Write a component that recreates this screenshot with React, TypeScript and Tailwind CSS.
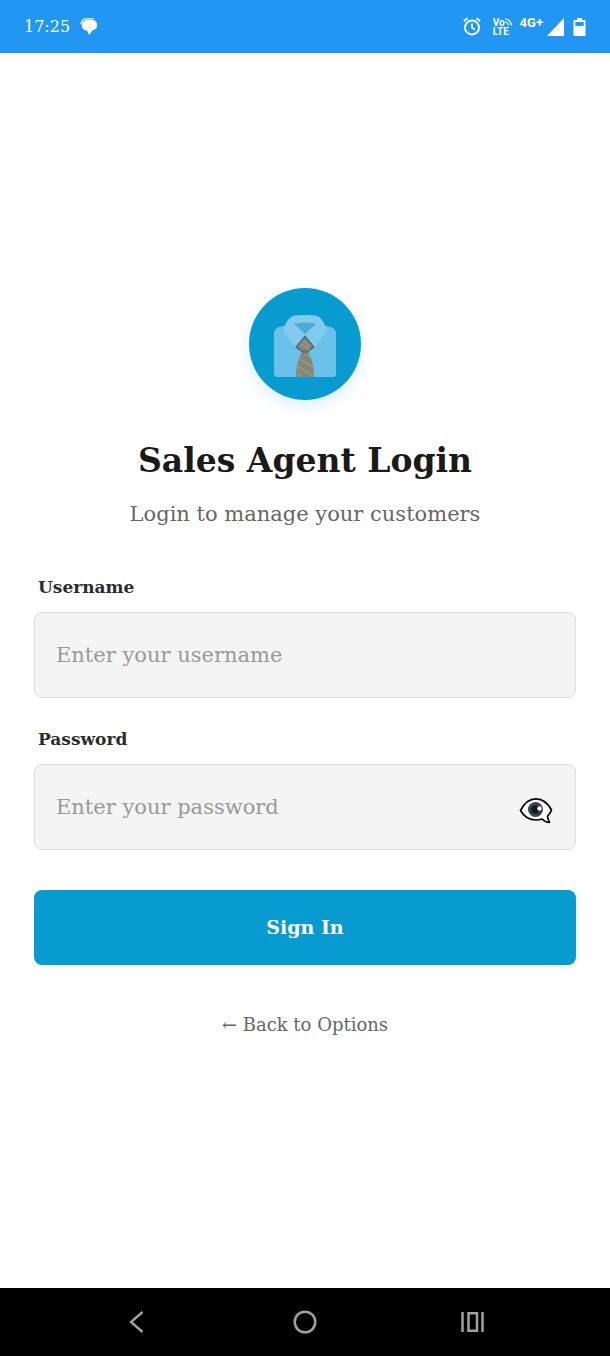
import { useState } from "react";

function ChatIcon() {
  return (
    <svg width="18" height="18" viewBox="0 0 18 18" aria-hidden="true">
      <path d="M0.800 6C1.500 2.500 3.500 .8 6.500 .8h7" fill="none" stroke="#fff" strokeWidth="1.300" />
      <path
        d="M7.500 2h5c2.700 0 4.700 2 4.700 4.900s-2 5-4.700 5.300L9.200 17 7 12.600C4 12.400 1.700 10.200 1.700 7.300S4.200 2 7.500 2Z"
        fill="#fff"
      />
    </svg>
  );
}

function AlarmIcon() {
  return (
    <svg width="18" height="19" viewBox="0 0 18 19" fill="none" stroke="#fff" aria-hidden="true">
      <circle cx="9" cy="10.500" r="7" strokeWidth="1.900" />
      <path d="M9 6.500v4.300l3 1.700" strokeWidth="1.700" />
      <path d="M0.800 4.200 4.500 1.200M17.200 4.200 13.500 1.200" strokeWidth="1.900" />
    </svg>
  );
}

function CastWaves() {
  return (
    <svg width="7" height="8" viewBox="0 0 7 8" fill="none" stroke="#fff" strokeWidth="1.200" aria-hidden="true">
      <path d="M0 1c3.500 0 6.300 2.800 6.300 6.500M0 4c2 0 3.400 1.500 3.400 3.500" />
    </svg>
  );
}

function StatusBar() {
  return (
    <header className="flex h-[53px] shrink-0 items-center justify-between bg-[#2196f3] px-6 text-white">
      <div className="flex items-center gap-2.5">
        <time className="text-base">17:25</time>
        <ChatIcon />
      </div>
      <div className="flex items-center">
        <AlarmIcon />
        <div className="ml-3 font-['Roboto',sans-serif] text-[10px] leading-[9px] font-bold">
          <div className="flex items-center">
            <span>Vo</span>
            <CastWaves />
          </div>
          <div>LTE</div>
        </div>
        <span className="ml-2 pb-2 font-['Roboto',sans-serif] text-[13px] leading-4 font-bold">4G+</span>
        <svg className="ml-1" width="17" height="18" viewBox="0 0 17 18" aria-hidden="true">
          <path d="M17 0v18H0Z" fill="#fff" />
        </svg>
        <svg className="ml-2" width="14" height="18" viewBox="0 0 14 18" aria-hidden="true">
          <path
            d="M5 0h5v2h2.500c.6 0 1 .4 1 1v14c0 .6-.4 1-1 1h-10c-.6 0-1-.4-1-1V3c0-.6.400-1 1-1H5ZM3.300 4v4h8.400V4Z"
            fill="#fff"
            fillRule="evenodd"
          />
        </svg>
      </div>
    </header>
  );
}

function ShirtIcon() {
  return (
    <svg width="62" height="62" viewBox="0 0 62 62" aria-hidden="true">
      <path d="M14 10 5 12C2 13 0 15 0 18v41c0 2 1 3 3 3h56c2 0 3-1 3-3V18c0-3-2-5-5-6l-9-2Z" fill="#6bc1e9" />
      <path d="M31 20 21 32l5 4h10l5-4Z" fill="#4c7382" />
      <path
        d="M19 1c4-1.300 20-1.300 24 0 4 1.500 7 6 10 14L41 32 31 20 21 32 9 15C12 7 15 2.500 19 1Z"
        fill="#82caee"
      />
      <path d="M20 9c4-2 18-2 22 0L31 19Z" fill="#4fabd6" />
      <path d="m31 23 7 8-4 6c4 7 6 14 6 25H22c0-11 2-18 6-25l-4-6Z" fill="#858681" />
      <path d="m27 29 8 5M25 43l14 9M23 51l16 10M30 38l6 4M29 26l7 5M23 58l5 4" stroke="#9c9c62" strokeWidth="1.500" />
      <path d="M27 36c3 1.500 5 1.500 8 0" fill="none" stroke="#626c70" strokeWidth="2" />
    </svg>
  );
}

function EyeBubbleIcon() {
  return (
    <svg width="34" height="28" viewBox="0 0 34 28" aria-hidden="true">
      <path
        d="M1.500 13.500C5.500 5.500 10.500 1.800 17 1.800s11.500 3.700 15.500 11.200c-.8 2.300-2.200 4.300-4 6 .1 2.600.6 4.100 2 6.500-3.500-.1-5.600-1.500-7.500-3.500-2 .7-4 1-6 1C10.500 23 5.500 20.500 1.500 13.500Z"
        fill="#fff"
        stroke="#000"
        strokeWidth="1.700"
        strokeLinejoin="round"
      />
      <circle cx="16.500" cy="12.500" r="7.500" fill="#3c444b" />
      <circle cx="16.500" cy="12.500" r="4.300" fill="#171a20" />
      <circle cx="20.500" cy="11.500" r="2.200" fill="#fff" />
    </svg>
  );
}

const labelClass = "px-1 text-[17px] leading-[26px] font-semibold text-[#2b2b2b]";
const inputClass =
  "h-[86px] w-full rounded-lg border border-[#dedede] bg-[#f4f4f4] pr-16 pl-[21px] text-[21px] text-[#1a1a1a] outline-none placeholder:text-[#999] focus:border-[#089bcf]";

function LoginForm() {
  const [visible, setVisible] = useState(false);
  return (
    <form className="mt-11 flex flex-col" onSubmit={(e) => e.preventDefault()}>
      <label htmlFor="username" className={labelClass}>
        Username
      </label>
      <input id="username" className={`${inputClass} mt-3`} placeholder="Enter your username" autoComplete="username" />
      <label htmlFor="password" className={`${labelClass} mt-7`}>
        Password
      </label>
      <div className="relative mt-3">
        <input
          id="password"
          className={inputClass}
          type={visible ? "text" : "password"}
          placeholder="Enter your password"
          autoComplete="current-password"
        />
        <button
          type="button"
          aria-label="Show password"
          aria-pressed={visible}
          className="absolute inset-y-0 right-[23px] flex items-center pt-2"
          onClick={() => setVisible(!visible)}
        >
          <EyeBubbleIcon />
        </button>
      </div>
      <button type="submit" className="mt-10 h-[75px] rounded-lg bg-[#089bcf] text-[19px] font-bold text-white">
        Sign In
      </button>
    </form>
  );
}

function NavigationBar() {
  return (
    <nav className="flex h-[68px] shrink-0 items-center justify-center gap-36 bg-black text-[#a0a0a0]">
      <button type="button" aria-label="Back">
        <svg width="24" height="24" viewBox="0 0 24 24" fill="none" stroke="currentColor" strokeWidth="2.400">
          <path d="M17.500 2 6 12l11.500 10" />
        </svg>
      </button>
      <button type="button" aria-label="Home">
        <svg width="24" height="24" viewBox="0 0 24 24" fill="none" stroke="currentColor" strokeWidth="2.500">
          <circle cx="12" cy="12" r="10.300" />
        </svg>
      </button>
      <button type="button" aria-label="Recent apps">
        <svg width="24" height="24" viewBox="0 0 24 24" fill="none" stroke="currentColor" strokeWidth="2.500">
          <path d="M1.500 2v20M21.500 2v20M7.500 3.200h8.500v17.600H7.500Z" />
        </svg>
      </button>
    </nav>
  );
}

export default function App() {
  return (
    <div className="flex min-h-screen flex-col bg-white font-['Roboto_Slab','DejaVu_Serif',serif]">
      <StatusBar />
      <main className="flex flex-1 flex-col justify-center px-[34px]">
        <div className="flex size-28 items-center justify-center self-center rounded-full bg-[#089bcf] pt-1 shadow-[0_6px_16px_rgba(8,155,207,0.15)]">
          <ShirtIcon />
        </div>
        <h1 className="mt-9 text-center text-[33px] leading-[50px] font-bold text-[#1a1a1a]">Sales Agent Login</h1>
        <p className="mt-3 text-center text-[21px] leading-8 text-[#666]">Login to manage your customers</p>
        <LoginForm />
        <a href="#options" className="mt-8 self-center py-4 text-lg leading-6 font-medium text-[#666]">
          ← Back to Options
        </a>
      </main>
      <NavigationBar />
    </div>
  );
}
